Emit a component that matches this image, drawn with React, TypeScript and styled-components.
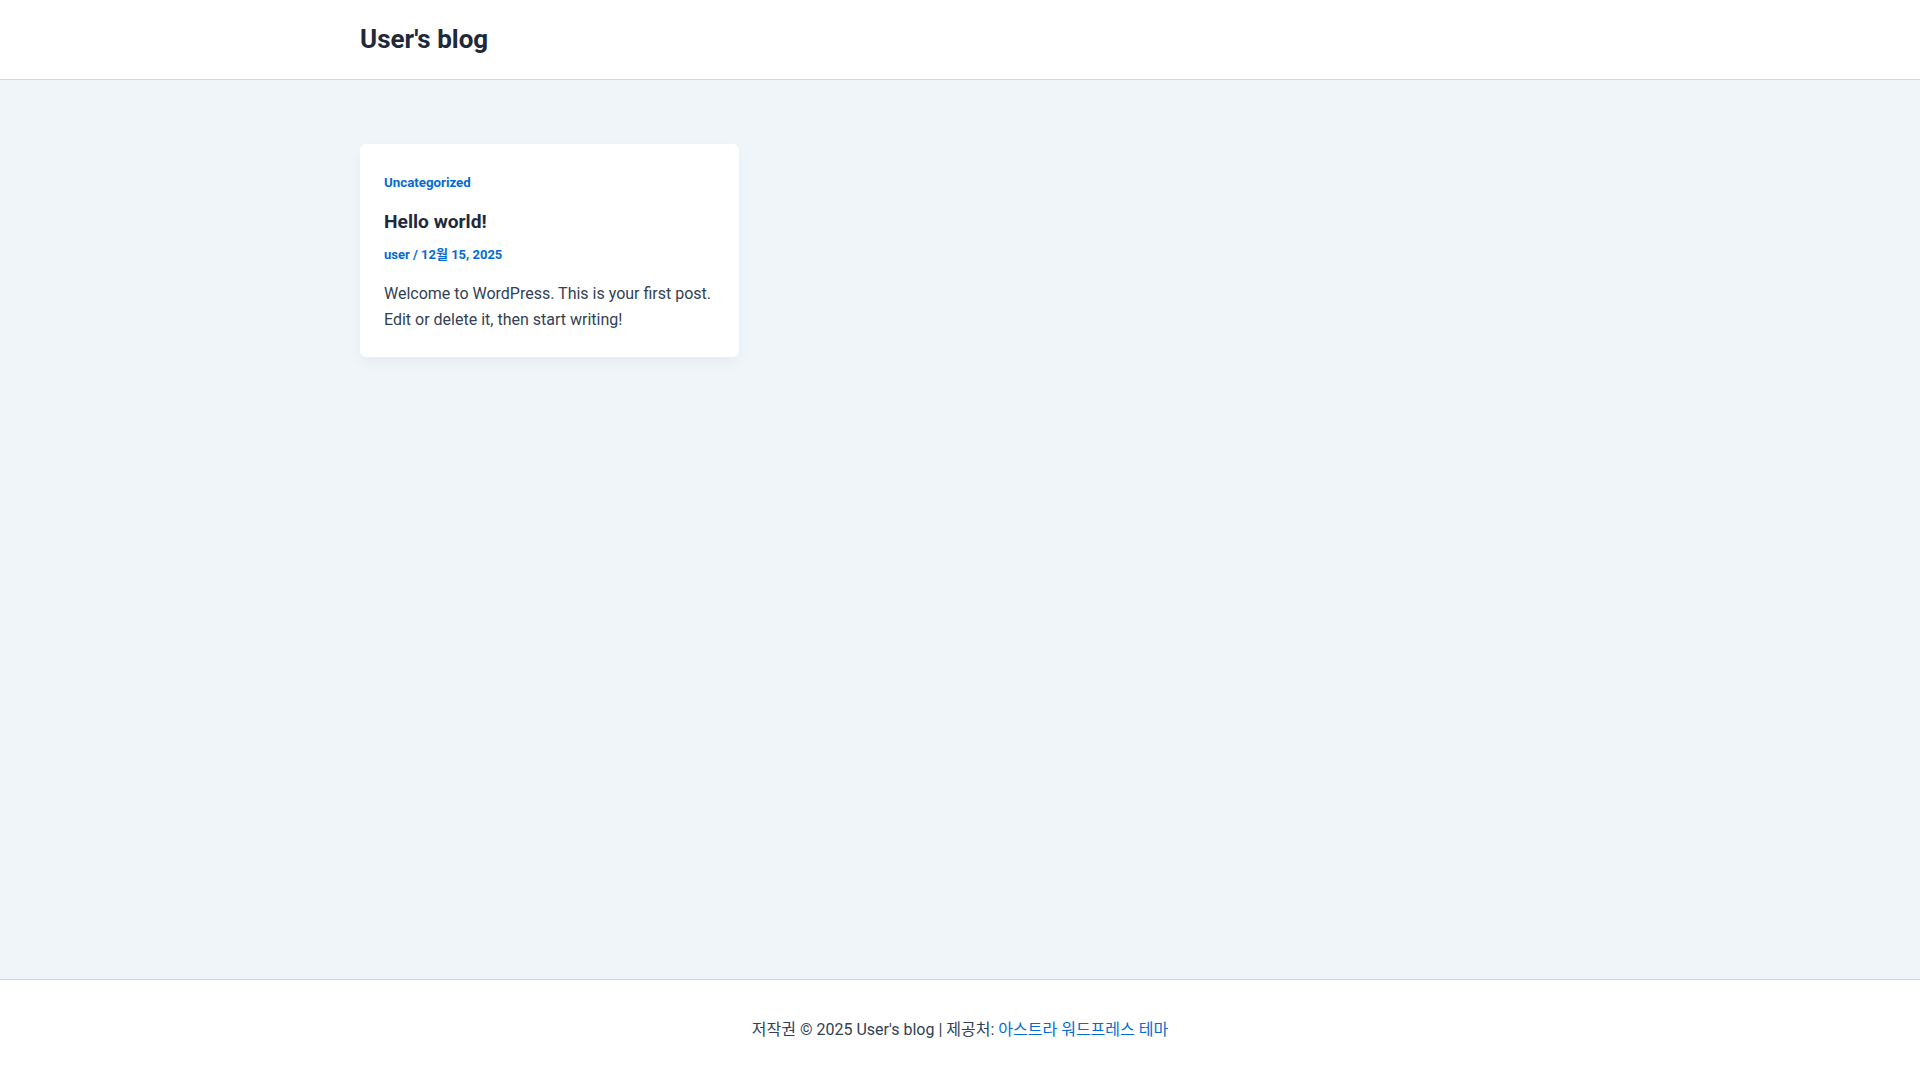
import React from 'react';
import styled, { createGlobalStyle } from 'styled-components';

const GlobalStyle = createGlobalStyle`
    html, body, #root {
        margin: 0;
        padding: 0;
        height: 100%;
    }
    body {
        font-family: Roboto, "Noto Sans CJK KR", "Liberation Sans", sans-serif;
        font-size: 16px;
        line-height: 1.65;
        color: #334155;
        background: #f0f5fa;
    }
    a {
        text-decoration: none;
    }
`;

const Page = styled.div`
    min-height: 100vh;
    display: flex;
    flex-direction: column;
`;

const Header = styled.header`
    background: #ffffff;
    border-bottom: 1px solid #d1d5db;
    height: 80px;
    padding-top: 2px;
    box-sizing: border-box;
    display: flex;
    align-items: center;
`;

const Container = styled.div`
    width: 1200px;
    margin: 0 auto;
`;

const SiteTitle = styled.a`
    font-size: 26px;
    font-weight: 700;
    line-height: 1.2;
    color: #1e293b;
`;

const Main = styled.main`
    flex: 1;
    padding-top: 64px;
`;

const Grid = styled.div`
    display: grid;
    grid-template-columns: repeat(3, 1fr);
    column-gap: 32px;
    align-items: start;
`;

const Card = styled.article`
    background: #ffffff;
    border-radius: 6px;
    box-shadow: 0px 6px 15px -2px rgba(16, 24, 40, 0.05);
    padding: 28px 24px 24px;
    display: flex;
    flex-direction: column;
`;

const Category = styled.a`
    font-size: 13.3px;
    font-weight: 700;
    line-height: 21px;
    color: #046bd2;
`;

const Title = styled.h2`
    margin: 16px 0 0;
    font-size: 19.2px;
    font-weight: 700;
    line-height: 1.4;
    color: #1e293b;
`;

const Meta = styled.div`
    margin-top: 8px;
    font-size: 13px;
    font-weight: 700;
    line-height: 21px;
    color: #046bd2;
`;

const Excerpt = styled.p`
    margin: 16px 0 0;
    font-size: 16px;
    line-height: 26px;
    color: #334155;
`;

const Footer = styled.footer`
    background: #ffffff;
    border-top: 1px solid #d1d5db;
    padding: 37px 0;
    text-align: center;
    font-size: 16px;
    line-height: 26px;
    color: #334155;
`;

const FooterLink = styled.a`
    color: #046bd2;
`;

export default function App() {
    return (
        <Page>
            <GlobalStyle />
            <Header>
                <Container>
                    <SiteTitle href="#">User's blog</SiteTitle>
                </Container>
            </Header>

            <Main>
                <Container>
                    <Grid>
                        <Card>
                            <Category href="#">Uncategorized</Category>
                            <Title>Hello world!</Title>
                            <Meta>user / 12월 15, 2025</Meta>
                            <Excerpt>
                                Welcome to WordPress. This is your first post. Edit or delete it, then start writing!
                            </Excerpt>
                        </Card>
                    </Grid>
                </Container>
            </Main>

            <Footer>
                저작권 © 2025 User's blog | 제공처: <FooterLink href="#">아스트라 워드프레스 테마</FooterLink>
            </Footer>
        </Page>
    );
}
